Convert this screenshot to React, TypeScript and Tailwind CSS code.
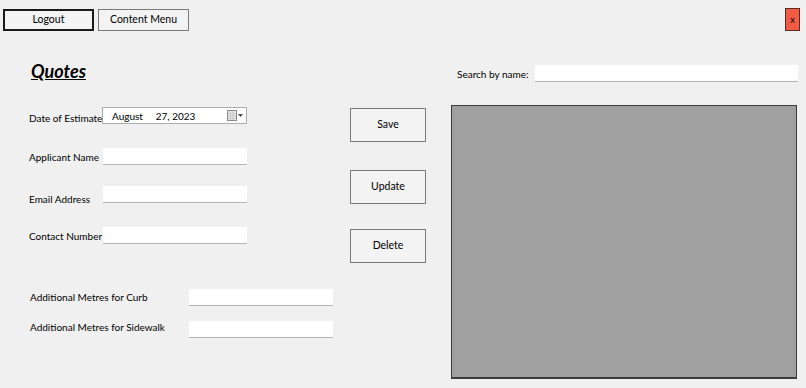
import React from 'react';

const font = { fontFamily: 'Lato, "Noto Sans", Arial, sans-serif' };

function Field() {
  return <div className="w-[144px] h-[17px] bg-white border-b border-[#b4b4b4]" />;
}

function Btn({ label }: { label: string }) {
  return (
    <button className="w-[76px] h-[34px] bg-[#f3f3f3] border border-[#7a7a7a] text-[10.5px] text-black">
      {label}
    </button>
  );
}

function CalendarIcon() {
  return (
    <svg width="17" height="11" viewBox="0 0 17 11" aria-hidden>
      <rect x="0.5" y="0.5" width="9" height="10" fill="#e8e8e8" stroke="#8a8a8a" />
      <path d="M1 3.5h8M1 6h8M1 8.5h8M3.5 1v9M6 1v9" stroke="#b8b8b8" strokeWidth="0.6" />
      <path d="M11 4h5l-2.5 3z" fill="#4a4a4a" />
    </svg>
  );
}

export default function App() {
  return (
    <div className="w-[806px] h-[388px] bg-[#f0f0f0] text-black text-[10px] overflow-hidden" style={font}>
      {/* top bar */}
      <div className="flex items-start pt-[9px] pl-[3px] pr-[6px] h-[31px]">
        <button className="w-[91px] h-[22px] bg-[#f3f3f3] border-2 border-[#1a1a1a] text-[10.5px]">Logout</button>
        <button className="ml-[4px] w-[91px] h-[22px] bg-[#f3f3f3] border border-[#7a7a7a] text-[10.5px]">Content Menu</button>
        <button className="ml-auto -mt-[1px] w-[15px] h-[23px] bg-[#f25c45] border border-[#5a2a22] text-[9px] leading-none">x</button>
      </div>

      <div className="flex">
        {/* form column */}
        <div className="ml-[29px] w-[305px] flex flex-col">
          <div className="mt-[28px] ml-[2px] h-[24px] text-[18px] font-bold italic underline leading-[24px]">Quotes</div>

          <div className="mt-[24px] flex items-center h-[17px]">
            <span className="w-[73px] whitespace-nowrap translate-y-[3px]">Date of Estimate</span>
            <div className="w-[145px] h-[17px] bg-white border border-[#adadad] flex items-center pl-[9px] pr-[2px]">
              <span className="whitespace-pre leading-none">August     27, 2023</span>
              <span className="ml-auto flex"><CalendarIcon /></span>
            </div>
          </div>

          <div className="mt-[24px] flex items-center h-[17px]">
            <span className="w-[74px] whitespace-nowrap translate-y-[1px]">Applicant Name</span>
            <Field />
          </div>

          <div className="mt-[21px] flex items-center h-[17px]">
            <span className="w-[74px] whitespace-nowrap translate-y-[5px]">Email Address</span>
            <Field />
          </div>

          <div className="mt-[24px] flex items-center h-[17px]">
            <span className="w-[74px] whitespace-nowrap translate-y-[1px]">Contact Number</span>
            <Field />
          </div>

          <div className="mt-[45px] flex items-center h-[17px]">
            <span className="ml-[1px] w-[159px] whitespace-nowrap">Additional Metres for Curb</span>
            <Field />
          </div>

          <div className="mt-[15px] flex items-center h-[17px]">
            <span className="ml-[1px] w-[159px] whitespace-nowrap -translate-y-[2px]">Additional Metres for Sidewalk</span>
            <Field />
          </div>
        </div>

        {/* action buttons */}
        <div className="ml-[16px] flex flex-col pt-[77px]">
          <Btn label="Save" />
          <div className="mt-[28px]"><Btn label="Update" /></div>
          <div className="mt-[25px]"><Btn label="Delete" /></div>
        </div>

        {/* search + list */}
        <div className="ml-[25px] w-[347px] flex flex-col">
          <div className="mt-[34px] flex items-center h-[17px]">
            <span className="ml-[6px] w-[78px] whitespace-nowrap translate-y-[1px]">Search by name:</span>
            <div className="w-[263px] h-[17px] bg-white border-b border-[#b4b4b4]" />
          </div>
          <div className="mt-[23px] w-[346px] h-[274px] bg-[#a0a0a0] border border-[#3c3c3c] border-b-2" />
        </div>
      </div>
    </div>
  );
}
